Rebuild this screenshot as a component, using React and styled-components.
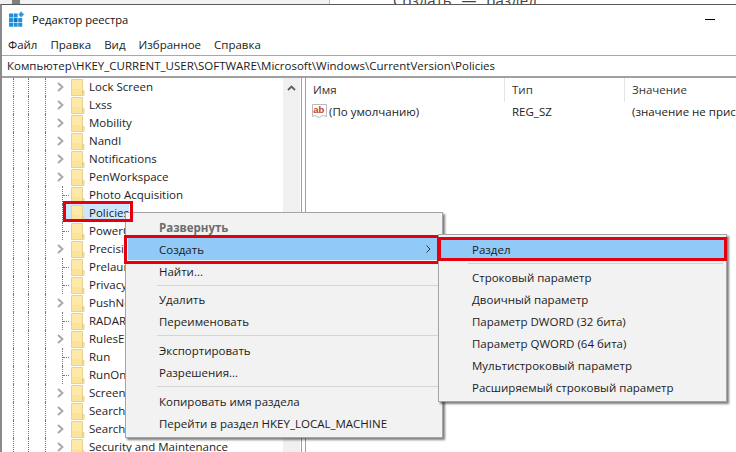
import React from 'react';
import styled, { createGlobalStyle } from 'styled-components';

const Global = createGlobalStyle`
  html, body { margin: 0; padding: 0; background: #fff; }
  body { font-family: "Open Sans", "Noto Sans", sans-serif; font-size: 11.5px; color: #1a1a1a; }
`;

const Page = styled.div`
  position: relative;
  width: 736px;
  height: 452px;
  overflow: hidden;
  display: flex;
  flex-direction: column;
  background: #fff;
`;

const Behind = styled.div`
  height: 4px;
  flex: none;
  display: flex;
  overflow: hidden;
  align-items: flex-end;
  background: #fff;
`;
const BehindGutter = styled.div`
  width: 12px;
  height: 4px;
  background: #f0f0f0;
`;
const BehindThumb = styled.div`
  width: 8px;
  height: 4px;
  background: #808080;
`;
const BehindSide = styled.div`
  width: 309px;
  height: 4px;
  background: #f2f2f2;
  border-right: 1px solid #bbb;
`;
const BehindText = styled.div`
  margin-left: 63px;
  font-size: 15px;
  line-height: 8px;
  white-space: pre;
  color: #444;
`;

const Win = styled.div`
  flex: 1;
  min-height: 0;
  display: flex;
  flex-direction: column;
  border-top: 1px solid #5a5a5a;
  border-left: 2px solid #8a8a8a;
`;

const TitleBar = styled.div`
  height: 31px;
  flex: none;
  display: flex;
  align-items: center;
  padding: 0 21px 3px 7px;
  box-sizing: border-box;
  gap: 7px;
  font-size: 11.2px;
  color: #111;
`;
const TitleText = styled.span`
  flex: 1;
`;
const MinimizeGlyph = styled.span`
  width: 10px;
  height: 1px;
  background: #000;
`;

const MenuBar = styled.div`
  height: 19px;
  flex: none;
  display: flex;
  align-items: center;
  gap: 13px;
  padding: 0 0 2px 6px;
  box-sizing: border-box;
  color: #222;
`;

const AddressBar = styled.div`
  height: 23px;
  flex: none;
  display: flex;
  align-items: center;
  padding: 0 0 2px 5px;
  box-sizing: border-box;
  border-top: 1px solid #a8a8a8;
  border-bottom: 2px solid #a0a0a0;
  color: #1a1a1a;
  white-space: nowrap;
`;

const Panes = styled.div`
  flex: 1;
  min-height: 0;
  display: flex;
`;

const Tree = styled.div`
  width: 281px;
  flex: none;
`;

const Row = styled.div`
  height: 18px;
  display: flex;
  align-items: stretch;
`;
const Guide = styled.span`
  width: ${p => p.$w}px;
  flex: none;
  border-right: 1px dotted #777;
  box-sizing: border-box;
`;
const Slot = styled.span`
  width: 25px;
  flex: none;
  display: flex;
  align-items: center;
  padding-left: 11px;
  box-sizing: border-box;
`;
const Connector = styled.span`
  position: relative;
  width: 7px;
  height: 18px;
  margin-left: 5px;
  border-left: 1px dotted #777;
  &::after {
    content: '';
    position: absolute;
    left: 0;
    top: 9px;
    width: 6px;
    border-top: 1px dotted #777;
  }
`;
const Node = styled.span`
  position: relative;
  display: flex;
  align-items: center;
  height: 18px;
  padding-left: 5px;
  margin-left: -5px;
  background: ${p => (p.$selected ? '#cce8ff' : 'transparent')};
  &::after {
    content: '';
    display: ${p => (p.$selected ? 'block' : 'none')};
    position: absolute;
    left: -3px;
    top: -3px;
    width: 70px;
    height: 21px;
    box-sizing: border-box;
    border: 3px solid #e3000f;
    z-index: 3;
  }
`;
const NodeLabel = styled.span`
  margin-left: 4px;
  padding-bottom: 2px;
  white-space: nowrap;
  color: #1c1c1c;
`;

const ScrollTrack = styled.div`
  width: 17px;
  flex: none;
  background: #f0f0f0;
  display: flex;
  justify-content: center;
  align-items: flex-start;
  padding-top: 7px;
  box-sizing: border-box;
`;
const Splitter = styled.div`
  width: 5px;
  flex: none;
  margin-left: 1px;
  box-sizing: border-box;
  border-left: 1px solid #a0a0a0;
  border-right: 1px solid #a0a0a0;
`;

const List = styled.div`
  flex: 1;
  min-width: 0;
  overflow: hidden;
`;
const ColGrid = styled.div`
  display: grid;
  grid-template-columns: 199px 120px 200px;
  align-items: center;
`;
const HeadRow = styled(ColGrid)`
  height: 24px;
`;
const HeadCell = styled.div`
  height: 24px;
  display: flex;
  align-items: center;
  padding: 0 0 2px 7px;
  box-sizing: border-box;
  border-right: 1px solid #e5e5e5;
  color: #333;
`;
const DataRow = styled(ColGrid)`
  height: 18px;
  white-space: nowrap;
`;
const DataCell = styled.div`
  display: flex;
  align-items: center;
  gap: 2px;
  padding-left: ${p => (p.$first ? 6 : 7)}px;
  color: #222;
`;

const Menu = styled.div`
  position: absolute;
  left: ${p => p.$x}px;
  top: ${p => p.$y}px;
  width: ${p => p.$w}px;
  box-sizing: border-box;
  padding: 3px 2px;
  background: #f2f2f2;
  border: 1px solid #a5a5a5;
  box-shadow: 2px 2px 2px rgba(0, 0, 0, 0.5);
  z-index: ${p => p.$z};
`;
const Item = styled.div`
  position: relative;
  height: 22px;
  display: flex;
  align-items: center;
  margin-right: ${p => p.$trim || 0}px;
  padding-left: ${p => p.$pad}px;
  background: ${p => (p.$active ? '#91c9f7' : 'transparent')};
  color: ${p => (p.$disabled ? '#6d6d6d' : '#1c1c1c')};
  font-weight: ${p => (p.$bold ? 700 : 400)};
  white-space: nowrap;
  &::after {
    content: '';
    display: ${p => (p.$marked ? 'block' : 'none')};
    position: absolute;
    inset: ${p => p.$inset};
    border: 3px solid #e3000f;
    pointer-events: none;
  }
`;
const Sep = styled.div`
  height: 1px;
  margin: 3px 1px ${p => (p.$tight ? 2 : 3)}px ${p => p.$gutter}px;
  background: #d4d4d4;
`;
const SubArrow = styled.svg`
  position: absolute;
  right: 6px;
  top: 7px;
`;

const RegIcon = () => (
  <svg width="16" height="16" viewBox="0 0 16 16" style={{ flex: 'none' }}>
    {[0, 1, 2].map(r =>
      [0, 1, 2].map(c =>
        r === 0 && c === 2 ? null : (
          <rect key={`${r}${c}`} x={c * 4.6} y={2.5 + r * 4.6} width="4" height="4" fill={r === 1 && c === 1 ? '#0a76c4' : '#1e8fdc'} />
        )
      )
    )}
    <path d="M12 .5 15 3.5 12 6.5 9.5 3.5Z" fill="#2a93d8" stroke="#9ccbea" strokeWidth=".6" />
  </svg>
);

const Folder = () => (
  <svg width="14" height="17" viewBox="0 0 14 17" style={{ flex: 'none' }}>
    <path d="M.5.5H11.5V11.5H13V16.5H.5Z" fill="#fde8a4" stroke="#e9d28c" />
    <path d="M11.5 11.5V15.5" stroke="#e2c67a" fill="none" />
    <rect x="1.5" y="1.5" width="9" height="14" fill="#fee9a8" />
    <rect x="1.5" y="10" width="9" height="5.5" fill="#fcdf8e" opacity=".6" />
  </svg>
);

const Chevron = () => (
  <svg width="7" height="10" viewBox="0 0 7 10" style={{ flex: 'none' }}>
    <path d="M1 1 5.5 5 1 9" fill="none" stroke="#a6a6a6" strokeWidth="1.8" />
  </svg>
);

const AbIcon = () => (
  <svg width="15" height="16" viewBox="0 0 15 16" style={{ flex: 'none' }}>
    <path d="M.5 1.5H14.5V13.5L11 12.5 7 14.5 3 12.5.5 13.5Z" fill="#fff" stroke="#b9b9b9" />
    <text x="1.3" y="10" fontFamily="Liberation Sans, sans-serif" fontWeight="700" fontSize="9.5" fill="#c8401c">ab</text>
  </svg>
);

const treeRows = [
  ['Lock Screen', 1], ['Lxss', 1], ['Mobility', 1], ['Nandl', 1], ['Notifications', 1], ['PenWorkspace', 1],
  ['Photo Acquisition', 0], ['Policies', 0, true], ['PowerCPL', 0], ['PrecisionTouchPad', 1], ['Prelaunch', 0],
  ['Privacy', 0], ['PushNotifications', 1], ['RADAR', 0], ['RulesEngine', 1], ['Run', 0], ['RunOnce', 0],
  ['Screensavers', 1], ['Search', 1], ['SearchSettings', 1], ['Security and Maintenance', 1],
];

const menuTop = [
  { t: 'Развернуть', bold: true, disabled: true },
  { t: 'Создать', active: true, marked: true, arrow: true, trim: 3 },
  { t: 'Найти...' },
  { sep: true, tight: true },
  { t: 'Удалить' },
  { t: 'Переименовать' },
  { sep: true },
  { t: 'Экспортировать' },
  { t: 'Разрешения...' },
  { sep: true },
  { t: 'Копировать имя раздела' },
  { t: 'Перейти в раздел HKEY_LOCAL_MACHINE' },
];

const menuSub = [
  { t: 'Раздел', active: true, marked: true },
  { sep: true, tight: true },
  { t: 'Строковый параметр' },
  { t: 'Двоичный параметр' },
  { t: 'Параметр DWORD (32 бита)' },
  { t: 'Параметр QWORD (64 бита)' },
  { t: 'Мультистроковый параметр' },
  { t: 'Расширяемый строковый параметр' },
];

const renderMenu = (items, pad, gutter, inset) =>
  items.map((m, i) =>
    m.sep ? (
      <Sep key={i} $gutter={gutter} $tight={m.tight} />
    ) : (
      <Item key={i} $pad={pad} $trim={m.trim} $active={m.active} $marked={m.marked} $bold={m.bold} $disabled={m.disabled} $inset={inset}>
        {m.t}
        {m.arrow && (
          <SubArrow width="5" height="8" viewBox="0 0 5 8">
            <path d="M.5.5 4 4 .5 7.5" fill="none" stroke="#333" />
          </SubArrow>
        )}
      </Item>
    )
  );

export default function App() {
  return (
    <Page>
      <Global />
      <Behind>
        <BehindGutter />
        <BehindThumb />
        <BehindSide />
        <BehindText>Создать" — "раздел.</BehindText>
      </Behind>
      <Win>
        <TitleBar>
          <RegIcon />
          <TitleText>Редактор реестра</TitleText>
          <MinimizeGlyph />
        </TitleBar>
        <MenuBar>
          <span>Файл</span>
          <span>Правка</span>
          <span>Вид</span>
          <span>Избранное</span>
          <span>Справка</span>
        </MenuBar>
        <AddressBar>Компьютер\HKEY_CURRENT_USER\SOFTWARE\Microsoft\Windows\CurrentVersion\Policies</AddressBar>
        <Panes>
          <Tree>
            {treeRows.map(([name, expandable, selected]) => (
              <Row key={name}>
                <Guide $w={12} />
                <Guide $w={15} />
                <Guide $w={17} />
                <Slot>{expandable ? <Chevron /> : <Connector />}</Slot>
                <Node $selected={selected}>
                  <Folder />
                  <NodeLabel>{name}</NodeLabel>
                </Node>
              </Row>
            ))}
          </Tree>
          <ScrollTrack>
            <svg width="9" height="6" viewBox="0 0 9 6">
              <path d="M1 5 4.5 1.5 8 5" fill="none" stroke="#606060" strokeWidth="1.8" />
            </svg>
          </ScrollTrack>
          <Splitter />
          <List>
            <HeadRow>
              <HeadCell>Имя</HeadCell>
              <HeadCell>Тип</HeadCell>
              <HeadCell>Значение</HeadCell>
            </HeadRow>
            <DataRow>
              <DataCell $first><AbIcon />(По умолчанию)</DataCell>
              <DataCell>REG_SZ</DataCell>
              <DataCell>(значение не присвоено)</DataCell>
            </DataRow>
          </List>
        </Panes>
      </Win>
      <Menu $x={125} $y={212} $w={318} $z={1}>
        {renderMenu(menuTop, 31, 29, '-3px -3px -4px -4px')}
      </Menu>
      <Menu $x={438} $y={234} $w={289} $z={2}>
        {renderMenu(menuSub, 31, 27, '-1px -3px -1px -3px')}
      </Menu>
    </Page>
  );
}
